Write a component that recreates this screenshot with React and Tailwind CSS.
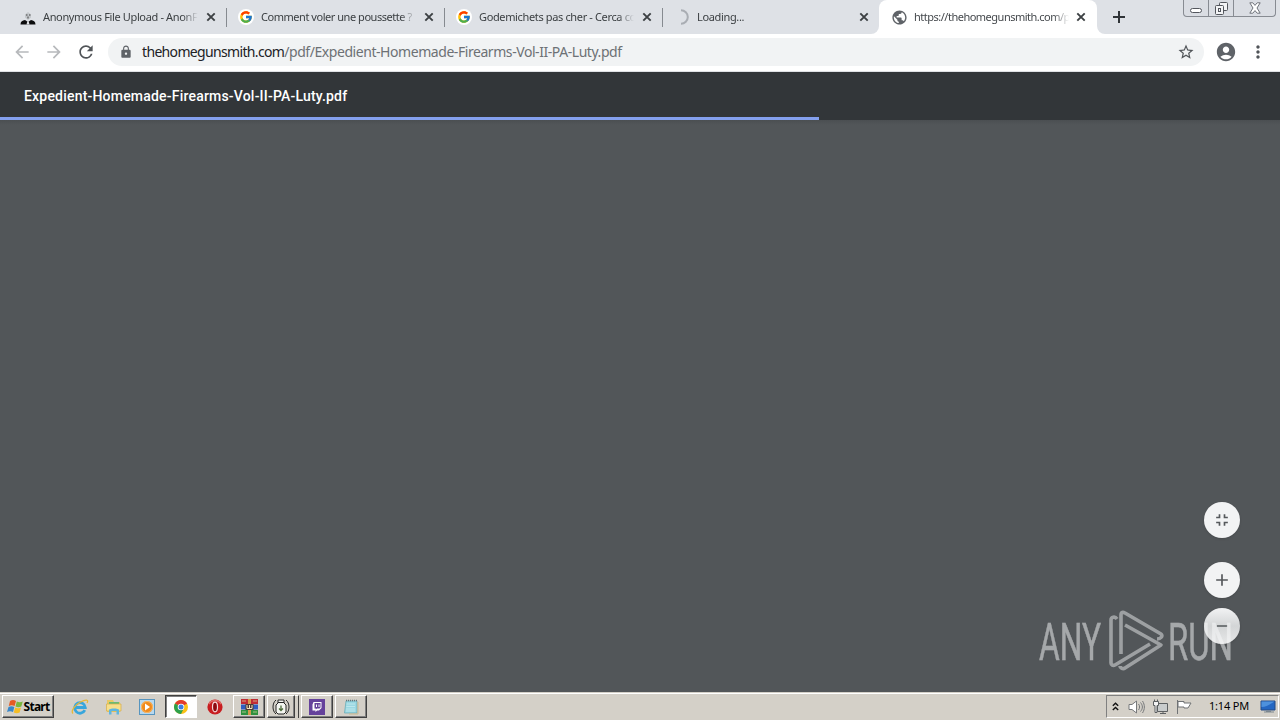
import { MdLock, MdRefresh, MdArrowBack, MdArrowForward, MdStarBorder, MdAccountCircle, MdMoreVert, MdAdd, MdRemove, MdFullscreenExit, MdPublic } from 'react-icons/md';
import { FcGoogle } from 'react-icons/fc';

function AnonIcon() {
  return (
    <svg width="16" height="16" viewBox="0 0 16 16">
      <path d="M5 5.500 8 3l3 2.500v3L8 11 5 8.500z" fill="#c3c7cb" />
      <path d="M6 5.500h1.500v1H6zM9 5.500h1.500v1H9zM7.500 7.500h1v2h-1z" fill="#444" />
      <path d="M.5 15.500c0-3 2-4 4.500-4.500l3 2 3-2c2.500.5 4.500 1.500 4.500 4.500z" fill="#0c0d0e" />
      <path d="M7.300 12.500h1.400l.8 3h-3z" fill="#e5e7eb" />
    </svg>
  );
}

function Spinner() {
  return (
    <svg width="16" height="16" viewBox="0 0 16 16" fill="none" stroke="#a9adb3" strokeWidth="2">
      <path d="M8 1.200a6.800 6.800 0 0 1 0 13.600" />
    </svg>
  );
}

function GoogleIcon() {
  return (
    <span className="flex h-4 w-4 items-center justify-center rounded-full bg-white">
      <FcGoogle size={14} />
    </span>
  );
}

function CloseIcon({ className }) {
  return (
    <svg width="14" height="14" viewBox="0 0 14 14" fill="none" stroke="#3c4043" strokeWidth="1.900" className={`shrink-0 ${className}`}>
      <path d="m3.300 3.300 7.400 7.400M10.700 3.300l-7.400 7.400" />
    </svg>
  );
}

const tabs = [
  { title: 'Anonymous File Upload - AnonFi', icon: <AnonIcon />, tracking: 'tracking-[-0.36px]' },
  { title: 'Comment voler une poussette ?', icon: <GoogleIcon />, tracking: 'tracking-[-0.46px]' },
  { title: 'Godemichets pas cher - Cerca co', icon: <GoogleIcon />, tracking: 'tracking-[-0.36px]' },
  { title: 'Loading...', icon: <Spinner />, tracking: 'tracking-[-0.35px]', last: true },
];

function TabTitle({ children, className }) {
  return (
    <span
      className={`ml-[7px] w-[155px] shrink-0 whitespace-nowrap text-[11px] leading-4 [mask-image:linear-gradient(to_right,black_90%,transparent)] ${className}`}
    >
      {children}
    </span>
  );
}

function TabStrip() {
  return (
    <div className="flex h-[34px] bg-white">
      <div className="flex rounded-br-lg bg-[#dee1e6] pl-[9px]">
        {tabs.map((tab) => (
          <div key={tab.title} className={`flex items-center ${tab.last ? 'w-[216px] pl-[10px]' : 'w-[218px] pl-[11px]'}`}>
            <span className="shrink-0">{tab.icon}</span>
            <TabTitle className={`text-[#3c4043] ${tab.last ? 'translate-x-px' : ''} ${tab.tracking}`}>{tab.title}</TabTitle>
            <CloseIcon className="ml-[6px]" />
            {!tab.last && <span className="ml-[8px] h-[19px] w-px shrink-0 bg-[#868a90]" />}
          </div>
        ))}
      </div>

      {/* Active tab */}
      <div className="w-[218px] bg-[linear-gradient(#dee1e6_50%,white_50%)]">
        <div className="flex h-full items-center rounded-t-lg bg-white pl-3">
          <MdPublic size={17} className="-mr-px shrink-0 text-[#5f6368]" />
          <TabTitle className="tracking-[-0.5px] text-[#45494d]">https://thehomegunsmith.com/p</TabTitle>
          <CloseIcon className="ml-[5px]" />
        </div>
      </div>

      <div className="flex flex-1 justify-between rounded-bl-lg bg-[#dee1e6]">
        <svg width="14" height="14" viewBox="0 0 14 14" stroke="#303438" strokeWidth="2" className="ml-[15px] mt-[10px]">
          <path d="M1 7h12M7 1v12" />
        </svg>
        <WindowControls />
      </div>
    </div>
  );
}

function WindowControls() {
  return (
    <div className="mr-1 flex h-[17px] w-[93px] rounded-b border border-t-0 border-[#878b92] bg-[#dadde3]">
      <span className="flex w-[25px] justify-center border-r border-[#878b92]">
        <span className="mt-[8px] h-[5px] w-[12px] rounded-sm border border-[#53565d] bg-white" />
      </span>
      <span className="flex w-[25px] justify-center border-r border-[#878b92]">
        <svg width="13" height="14" viewBox="0 0 13 14" fill="#f3f4f6" stroke="#53565d" className="mt-px">
          <rect x="4.500" y="1.500" width="8" height="8" rx="1" />
          <rect x="0.500" y="4.500" width="8" height="9" rx="1" />
          <rect x="3.500" y="7.500" width="2" height="3" />
        </svg>
      </span>
      <span className="flex flex-1 justify-center">
        <svg width="12" height="12" viewBox="0 0 12 12" fill="#fff" stroke="#6f737a" className="mt-[2px]">
          <path d="M.8.8h3L6 3.400 8.200.8h3L8 6l3.200 5.200h-3L6 8.600l-2.200 2.600h-3L4 6z" />
        </svg>
      </span>
    </div>
  );
}

function Toolbar() {
  return (
    <div className="flex h-[38px] items-center border-b border-[#dfe1e5] bg-white pb-px">
      <MdArrowBack size={20} className="ml-3 text-[#b7b9bc]" />
      <MdArrowForward size={20} className="ml-3 text-[#b7b9bc]" />
      <MdRefresh size={20} className="ml-3 text-[#505458]" />
      <div className="ml-3 flex h-7 w-[1096px] items-center rounded-full bg-[#f1f3f4]">
        <MdLock size={14} className="ml-[11px] text-[#5f6368]" />
        <span className="-mt-px ml-[9px] flex-1 whitespace-nowrap text-[14px] tracking-[-0.44px] text-[#6d7175]">
          <span className="tracking-[-0.66px] text-[#202124]">thehomegunsmith.com</span>
          /pdf/Expedient-Homemade-Firearms-Vol-II-PA-Luty.pdf
        </span>
        <MdStarBorder size={18} className="mr-[9px] text-[#505458]" />
      </div>
      <MdAccountCircle size={22} className="ml-[11px] text-[#5f6368]" />
      <MdMoreVert size={20} className="ml-[11px] text-[#505458]" />
    </div>
  );
}

function PdfHeader() {
  return (
    <div className="flex h-12 flex-col bg-[#323639] text-white">
      <div className="flex h-[45px] items-center pl-6 pt-1 font-[Roboto] text-[14px] font-medium">
        <span className="whitespace-nowrap tracking-[0.2px]">Expedient-Homemade-Firearms-Vol-II-PA-Luty.pdf</span>
      </div>
      <div className="h-[3px] w-[819px] bg-[#84a0ee]" />
    </div>
  );
}

function RoundButton({ children, className = 'bg-[#f2f3f4]' }) {
  return (
    <button className={`flex h-9 w-9 shrink-0 items-center justify-center rounded-full text-[#55585b] shadow ${className}`}>
      {children}
    </button>
  );
}

function Watermark() {
  return (
    <div className="absolute bottom-[18px] left-[1037px] opacity-50">
      <svg width="210" height="64" viewBox="0 0 210 64" fill="none">
        <g fill="#f8f9fa" stroke="#f8f9fa" strokeWidth=".5" fontFamily="Roboto" fontSize="52" fontWeight="400">
          <text x="2" y="49.500" textLength="62" lengthAdjust="spacingAndGlyphs">ANY</text>
          <text x="131" y="49.500" textLength="65" lengthAdjust="spacingAndGlyphs">RUN</text>
        </g>
        <g stroke="#e8eaeb" strokeWidth="3.600" strokeLinejoin="round">
          <path d="M80 9c-2-3-6-2-6 1v43c0 2 2 3 4 2l35-21" />
          <path d="M84 44V5c0-3 2-3 4-2l36 21c2 2 0 5-4 5" />
          <path d="m88 15 36 20-36 23c-2 1.500-5 0-5-2" />
        </g>
      </svg>
    </div>
  );
}

function PdfViewer() {
  return (
    <div className="relative h-[572px] bg-[#525659]">
      <div className="h-[5px] bg-gradient-to-b from-[#4b4f52] to-[#525659]" />
      <div className="flex flex-col items-end pr-10 pt-[377px]">
        <RoundButton>
          <MdFullscreenExit size={20} />
        </RoundButton>
        <RoundButton className="mt-6 bg-[#f2f3f4]">
          <MdAdd size={20} />
        </RoundButton>
        <RoundButton className="mt-[10px] bg-gradient-to-b from-[#f2f3f4] via-[#d3d5d6] to-[#e6e7e8]">
          <MdRemove size={18} />
        </RoundButton>
      </div>
      <Watermark />
    </div>
  );
}

function WindowsFlag() {
  return (
    <svg width="17" height="16" viewBox="0 0 17 16">
      <path d="M3 2c2-1.200 4-1.200 6 0L7.600 7c-2-1-3.600-1-5.800 0z" fill="#e65b24" />
      <path d="M9.800 2.400c2 1 3.800 1 6 0l-1.500 5c-2 1-3.800 1-5.800 0z" fill="#79b83e" />
      <path d="M1.500 8c2-1.100 3.900-1.100 5.800 0L6 13c-2-1-3.800-1-6 0z" fill="#3a87c9" />
      <path d="M8.200 8.400c2 1 3.800 1 5.800 0l-1.400 5c-2 1-3.800 1-5.800 0z" fill="#f5bd25" />
    </svg>
  );
}

function ExplorerIcon() {
  return (
    <svg width="18" height="18" viewBox="0 0 18 18" fill="none">
      <path d="M13.800 12.200A5.300 5.300 0 1 1 14.300 9.500H5" stroke="#38a6dc" strokeWidth="2.800" />
      <path d="M2 15.500C-.5 13 4 7 9.500 4S18 1.500 16 5" stroke="#e6b838" strokeWidth="1.300" />
    </svg>
  );
}

function FolderIcon() {
  return (
    <svg width="18" height="18" viewBox="0 0 18 18">
      <path d="M2 2h6l1 2h6v10H2z" fill="#e9c965" />
      <path d="M4 4h10v2H4z" fill="#6cbb73" />
      <path d="M1.500 6H16v7H1.500z" fill="#f7df8b" stroke="#d5ad49" strokeWidth=".7" />
      <path d="M4 16.500V12c0-2 10-2 10 0v4.500h-2.500V13h-5v3.500z" fill="#5fb6df" />
    </svg>
  );
}

function MediaIcon() {
  return (
    <svg width="16" height="16" viewBox="0 0 16 16">
      <rect x=".5" y=".5" width="15" height="15" fill="#b8d8ee" stroke="#5795bf" />
      <circle cx="8" cy="8" r="6" fill="#f08a1c" />
      <circle cx="8" cy="8" r="5.500" fill="none" stroke="#f9ba69" />
      <path d="m6 4.500 5 3.500-5 3.500z" fill="#fff" />
    </svg>
  );
}

function ChromeIcon() {
  return (
    <svg width="14" height="14" viewBox="0 0 14 14">
      <circle cx="7" cy="7" r="7" fill="#fbc116" />
      <path d="M7 7 .94 3.500A7 7 0 0 1 13.060 3.500z" fill="#e33b2e" />
      <path d="M7 7 .94 3.500A7 7 0 0 0 7 14l2-4z" fill="#2da14c" />
      <circle cx="7" cy="7" r="3.300" fill="#fff" />
      <circle cx="7" cy="7" r="2.500" fill="#3d7de0" />
    </svg>
  );
}

function OperaIcon() {
  return (
    <svg width="16" height="16" viewBox="0 0 16 16">
      <circle cx="8" cy="8" r="7.600" fill="#c81d20" />
      <path d="M2 5a7 7 0 0 1 12 0" fill="none" stroke="#df6b67" strokeWidth="1.500" />
      <ellipse cx="8" cy="8" rx="2.500" ry="4.800" fill="#8e0a10" stroke="#f3dcdc" strokeWidth="1.200" />
    </svg>
  );
}

function WinrarIcon() {
  return (
    <svg width="17" height="16" viewBox="0 0 17 16">
      <path d="M0 0h17v5H0z" fill="#c02b34" />
      <path d="M0 5.500h17v5H0z" fill="#2f5dc0" />
      <path d="M0 11h17v5H0z" fill="#2f9140" />
      <path d="M7 0h3v16H7z" fill="#d79a4c" />
      <path d="M4.500 5h8v6h-8z" fill="#4d3a35" />
      <path d="M6 6v3.500h5V6M8.500 6v3.500" fill="none" stroke="#f5e6bf" />
      <path d="M1 2h4M12 2h4M1 13h4M12 13h4" stroke="#ded7a5" strokeWidth=".7" />
    </svg>
  );
}

function JarIcon() {
  return (
    <svg width="18" height="16" viewBox="0 0 18 16" fill="none" stroke="#252525">
      <path d="M4 1C0 4 0 12 4 15M14 1c4 3 4 11 0 14" />
      <path d="M6 4V1h6v3l2 2v7l-2 2H6l-2-2V6z" fill="#f4f5f0" />
      <path d="M6 3.500h6" />
      <path d="M9 6.500v5M7 9.500l2 2 2-2" stroke="#4c6b3b" strokeWidth="1.300" />
    </svg>
  );
}

function TwitchIcon() {
  return (
    <svg width="16" height="16" viewBox="0 0 16 16">
      <path d="M0 0h16v16H0z" fill="#65429b" />
      <path d="M4.500 3h8v6L10 11.500H8L6.500 13v-1.500h-3v-6z" fill="#fff" />
      <path d="M5.500 4h6v4.500l-1 1H8L6.800 10.500v-1H5.500z" fill="#65429b" />
      <path d="M7.500 5.500V8M10 5.500V8" stroke="#fff" />
    </svg>
  );
}

function NotepadIcon() {
  return (
    <svg width="16" height="16" viewBox="0 0 16 16">
      <path d="M3 2h11v12H1.500z" fill="#9bd8e2" stroke="#62a8b3" strokeWidth=".7" />
      <path d="M3.500 5H12M3.300 7.500H12M3 10h9M2.800 12H12" stroke="#c5ebef" strokeWidth=".8" />
      <path d="M3 1.500h11" stroke="#65777c" strokeWidth="1.500" strokeDasharray="1 1" />
      <path d="M15 3v12H6" fill="none" stroke="#c9b98f" />
    </svg>
  );
}

const raised = 'border border-t-white border-l-white border-b-[#404040] border-r-[#404040] shadow-[inset_-1px_-1px_0_#808080]';

function TaskButton({ children, className = '' }) {
  return <button className={`flex h-[23px] items-center justify-center bg-[#d4d0c8] ${raised} ${className}`}>{children}</button>;
}

function Tray() {
  return (
    <div className="ml-auto mr-px flex h-[23px] w-[173px] items-center border border-b-white border-l-[#808080] border-r-white border-t-[#808080]">
      <svg width="7" height="9" viewBox="0 0 7 9" fill="none" stroke="#111" strokeWidth="1.400" className="ml-[5px]">
        <path d="m.8 3.700 2.700-2.500 2.700 2.500M.8 8l2.700-2.500L6.200 8" />
      </svg>
      <svg width="17" height="16" viewBox="0 0 17 16" fill="#fff" stroke="#77797b" className="ml-[9px]">
        <path d="M1 5.500h3L8.500 2v12L4 10.500H1z" />
        <path d="M10.500 5c1.500 2 1.500 4 0 6M12.500 3.500c2.500 3 2.500 6 0 9M14.500 2c2.500 4 2.500 8 0 12" fill="none" />
      </svg>
      <svg width="17" height="16" viewBox="0 0 17 16" fill="#c9cccc" stroke="#5d6062" className="ml-[7px]">
        <path d="M5.500 4.500h10v8h-10zM8 14.500h6M11 12.500v2" />
        <path d="M1.500 2.500h5v4H5v7H3v-7H1.500zM2.500.5v2M5.500.5v2" fill="#f4f4f4" />
      </svg>
      <svg width="17" height="16" viewBox="0 0 17 16" fill="#fff" stroke="#707375" className="ml-[7px]">
        <path d="M1.500 1v14M2 2.500h6v1.500h7l-3 5H8V8H2z" />
      </svg>
      <span className="ml-[16px] whitespace-nowrap text-[11px] tracking-[-0.2px] text-black">1:14 PM</span>
      <svg width="16" height="14" viewBox="0 0 16 14" className="ml-auto mr-[2px]">
        <path d="M1 1h14v9H1z" fill="#2467c2" stroke="#244b83" />
        <path d="M1.500 7C6 7 9 5 14.500 1.500H1.500z" fill="#4d91dd" />
        <path d="M6 10.500h5v1h3v1H4v-1h2z" fill="#7c8790" />
      </svg>
    </div>
  );
}

function Taskbar() {
  return (
    <div className="flex h-7 items-start border-t border-[#d4d0c8] bg-[#d4d0c8] pt-[2px] shadow-[inset_0_1px_0_#fff]">
      <TaskButton className="ml-[2px] w-[52px]">
        <WindowsFlag />
        <span className="text-[12px] font-bold tracking-[-0.75px] text-black">Start</span>
      </TaskButton>
      <div className="ml-[17px] flex h-[23px] items-center gap-4">
        <ExplorerIcon />
        <FolderIcon />
        <MediaIcon />
      </div>
      <button className="ml-[10px] flex h-[23px] w-[32px] items-center justify-center border border-b-white border-l-[#404040] border-r-white border-t-[#404040] bg-white shadow-[inset_1px_1px_0_#808080]">
        <ChromeIcon />
      </button>
      <span className="ml-[10px] flex h-[23px] items-center"><OperaIcon /></span>
      <TaskButton className="ml-[10px] w-[32px]"><WinrarIcon /></TaskButton>
      <TaskButton className="ml-[2px] w-[28px]"><JarIcon /></TaskButton>
      <span className="h-[23px] w-[4px] border-r border-t border-r-[#404040] border-t-white" />
      <TaskButton className="ml-[2px] w-[32px]"><TwitchIcon /></TaskButton>
      <TaskButton className="ml-[2px] w-[32px]"><NotepadIcon /></TaskButton>
      <Tray />
    </div>
  );
}

export default function App() {
  return (
    <div className="h-[720px] w-[1280px] overflow-hidden font-['Noto_Sans',sans-serif]">
      <TabStrip />
      <Toolbar />
      <PdfHeader />
      <PdfViewer />
      <Taskbar />
    </div>
  );
}
